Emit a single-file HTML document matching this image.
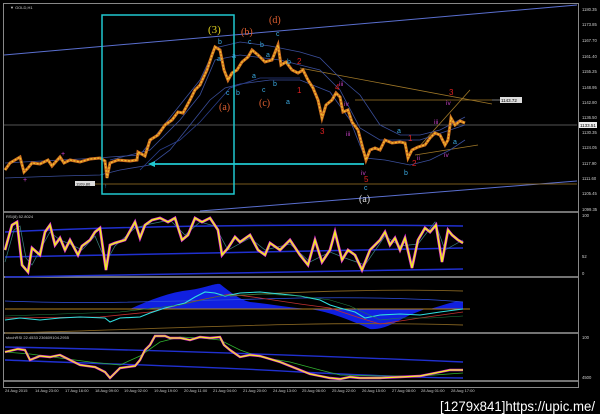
<!DOCTYPE html>
<html><head><meta charset="utf-8"><style>
html,body{margin:0;padding:0;background:#000;width:600px;height:414px;overflow:hidden}
svg{display:block}
</style></head><body>
<svg width="600" height="414" viewBox="0 0 600 414" xmlns="http://www.w3.org/2000/svg" font-family="Liberation Sans, sans-serif">
<rect width="600" height="414" fill="#000"/>
<rect x="3.5" y="3.5" width="575" height="384" fill="none" stroke="#888" stroke-width="1"/>
<line x1="4" y1="212" x2="578" y2="212" stroke="#999" stroke-width="1.5"/>
<line x1="4" y1="277" x2="578" y2="277" stroke="#999" stroke-width="1.5"/>
<line x1="4" y1="333" x2="578" y2="333" stroke="#999" stroke-width="1.5"/>
<line x1="4" y1="381" x2="578" y2="381" stroke="#999" stroke-width="1.5"/>
<text x="10" y="9" font-size="4" fill="#ccc">▼ GOLD,H1</text>

<line x1="4" y1="55" x2="577" y2="5" stroke="#5a6fd0" stroke-width="1"/>
<line x1="200" y1="211" x2="577" y2="181" stroke="#5a6fd0" stroke-width="1"/>
<line x1="4" y1="125" x2="577" y2="125" stroke="#aaa" stroke-width="0.6"/>
<line x1="75" y1="184" x2="577" y2="184" stroke="#a07828" stroke-width="0.8"/>
<line x1="355" y1="100" x2="492" y2="100" stroke="#a07828" stroke-width="0.8"/>
<line x1="300" y1="68" x2="492" y2="104" stroke="#a07828" stroke-width="0.8"/>
<line x1="415" y1="155" x2="478" y2="145" stroke="#a07828" stroke-width="0.8"/>
<line x1="418" y1="148" x2="470" y2="90" stroke="#a07828" stroke-width="0.8"/>
<polyline fill="none" stroke="#3a4e9a" stroke-width="0.8" points="5,163 60,160 100,158 110,157 140,155 160,130 180,105 200,80 215,48 240,42 270,46 300,52 320,58 340,78 360,95 380,125 400,135 420,135 440,130 465,117"/>
<polyline fill="none" stroke="#3a4e9a" stroke-width="0.8" points="5,178 60,176 100,175 120,170 150,165 170,150 190,125 210,100 225,88 240,84 270,80 300,80 330,92 350,120 365,158 385,160 410,165 430,160 450,150 465,140"/>
<polyline fill="none" stroke="#3a4e9a" stroke-width="0.8" points="110,160 150,150 180,120 200,95 215,60 240,55 280,60 320,70 340,90 360,128 380,140 420,140 450,130 465,125"/>
<polyline fill="none" stroke="#2a3e8a" stroke-width="0.8" points="140,170 160,150 180,140 200,122 215,105 230,88 260,78 300,78"/>
<polyline fill="none" stroke="#d07020" stroke-width="3" points="5,170 10,163 15,160 20,157 24,172 28,168 32,163 40,164 48,160 52,166 60,157 64,163 70,160 80,162 90,159 100,158 105,161 107,178 110,163 118,160 130,161 137,160 138,152 145,156 150,140 158,135 165,125 172,120 178,112 183,113 190,100 195,90 200,85 207,70 212,55 215,47 220,50 224,70 228,80 232,73 237,70 242,62 248,57 252,50 258,55 265,62 272,60 278,45 281,65 286,62 292,70 298,73 303,70 308,80 313,88 318,100 322,118 326,105 332,100 336,93 340,97 343,112 348,110 352,122 358,130 362,145 366,160 370,150 375,148 380,150 385,140 392,143 400,142 405,143 408,158 412,150 418,147 425,145 430,138 435,133 440,135 445,145 448,140 451,118 455,125 460,121 465,123"/>
<polyline fill="none" stroke="#f0c030" stroke-width="1.3" stroke-dasharray="2 1.5" points="5,170 10,163 15,160 20,157 24,172 28,168 32,163 40,164 48,160 52,166 60,157 64,163 70,160 80,162 90,159 100,158 105,161 107,178 110,163 118,160 130,161 137,160 138,152 145,156 150,140 158,135 165,125 172,120 178,112 183,113 190,100 195,90 200,85 207,70 212,55 215,47 220,50 224,70 228,80 232,73 237,70 242,62 248,57 252,50 258,55 265,62 272,60 278,45 281,65 286,62 292,70 298,73 303,70 308,80 313,88 318,100 322,118 326,105 332,100 336,93 340,97 343,112 348,110 352,122 358,130 362,145 366,160 370,150 375,148 380,150 385,140 392,143 400,142 405,143 408,158 412,150 418,147 425,145 430,138 435,133 440,135 445,145 448,140 451,118 455,125 460,121 465,123"/>
<text x="61" y="156" font-size="7" fill="#d040d0">+</text>
<text x="23" y="182" font-size="7" fill="#d040d0">+</text>
<rect x="102" y="15" width="132" height="179" fill="none" stroke="#20c8d0" stroke-width="1.5"/>
<line x1="152" y1="164" x2="364" y2="164" stroke="#20c8d0" stroke-width="1.8"/>
<polygon points="148,164 155,161 155,167" fill="#20c8d0"/>
<text x="104" y="188" font-size="6" fill="#3090e0">↑</text>
<rect x="75" y="181" width="20" height="5" fill="#ddd"/>
<text x="76" y="185.5" font-size="4" fill="#000">1109.80</text>
<rect x="500" y="97" width="22" height="6" fill="#ddd"/>
<text x="501" y="102" font-size="4.5" fill="#000">1143.72</text>
<line x1="492" y1="100" x2="500" y2="100" stroke="#ccc" stroke-width="0.6"/>
<g font-family="Liberation Serif, serif">
<text x="208" y="33" font-size="11" fill="#e0d020">(3)</text>
<text x="241" y="35" font-size="10" fill="#e06030">(b)</text>
<text x="269" y="23" font-size="10" fill="#e06030">(d)</text>
<text x="219" y="110" font-size="10" fill="#e06030">(a)</text>
<text x="259" y="106" font-size="10" fill="#e06030">(c)</text>
<text x="359" y="202" font-size="10" fill="#ddd">(a)</text>
</g>
<g font-size="7" fill="#3aa8e0">
<text x="218" y="44">b</text><text x="217" y="61">a</text><text x="226" y="95">c</text><text x="236" y="95">b</text>
<text x="232" y="58">a</text><text x="248" y="44">c</text><text x="260" y="47">b</text><text x="266" y="57">a</text>
<text x="252" y="78">a</text><text x="262" y="92">c</text><text x="273" y="86">b</text><text x="286" y="104">a</text>
<text x="287" y="64">b</text><text x="276" y="36">c</text>
<text x="397" y="133">a</text><text x="404" y="175">b</text><text x="364" y="190">c</text><text x="453" y="144">a</text>
</g>
<g font-size="8" fill="#e02020">
<text x="297" y="64">2</text><text x="297" y="93">1</text><text x="335" y="90">4</text><text x="320" y="134">3</text>
<text x="408" y="141">1</text><text x="412" y="166">2</text><text x="449" y="95">3</text><text x="364" y="182">5</text>
</g>
<g font-size="6.5" fill="#c040c0">
<text x="344" y="106">iv</text><text x="339" y="86">iii</text><text x="346" y="136">iii</text>
<text x="361" y="175">iv</text><text x="434" y="124">iii</text><text x="446" y="105">iv</text><text x="444" y="157">iv</text><text x="417" y="160">ii</text>
</g>
<g font-size="4.2" fill="#ccc">
<text x="582" y="11">1180.35</text><text x="582" y="26">1173.85</text><text x="582" y="42">1167.70</text>
<text x="582" y="58">1161.40</text><text x="582" y="73">1155.25</text><text x="582" y="89">1148.95</text>
<text x="582" y="104">1142.80</text><text x="582" y="119">1136.50</text><text x="582" y="134">1130.35</text>
<text x="582" y="149">1124.05</text><text x="582" y="165">1117.90</text><text x="582" y="180">1111.60</text>
<text x="582" y="195">1105.45</text><text x="582" y="211">1099.35</text>
<text x="582" y="217">100</text><text x="582" y="258">52</text><text x="582" y="275">0</text>
<text x="582" y="339">100</text><text x="582" y="379">4500</text>
</g>
<rect x="579" y="122" width="18" height="6" fill="#eee"/>
<text x="580" y="127" font-size="4.5" fill="#000">1133.51</text>

<text x="6" y="218" font-size="4" fill="#ccc">RSI(8) 52.8024</text>
<path d="M5,232 C150,225 300,224 463,226" fill="none" stroke="#2030d0" stroke-width="1.5"/>
<path d="M5,257 C150,253 300,250 463,248" fill="none" stroke="#2030d0" stroke-width="1.5"/>
<path d="M5,277 C150,275 300,273 463,269" fill="none" stroke="#2030d0" stroke-width="1.5"/>
<polyline fill="none" stroke="#3a8080" stroke-width="0.7" points="5,262 14,230 20,226 26,258 32,265 40,250 50,232 60,240 70,244 82,250 95,236 106,262 115,246 135,228 150,224 170,220 185,235 200,222 215,226 228,250 250,238 265,250 290,244 310,262 330,252 345,258 365,265 385,236 400,246 418,244 435,222 445,250 463,240"/>
<polyline fill="none" stroke="#e030e0" stroke-width="2.8" points="5,250 12,225 17,222 22,265 28,272 32,248 40,255 45,232 50,225 55,245 60,238 65,250 70,240 78,255 82,246 90,240 95,232 100,228 106,270 110,245 115,243 125,240 135,222 140,238 145,225 152,220 160,218 168,222 175,218 182,240 188,235 195,218 202,222 210,218 218,230 222,255 228,248 235,237 240,242 250,235 258,250 265,255 270,243 280,250 290,240 300,255 308,265 315,240 322,262 330,250 335,232 342,260 348,250 355,255 362,270 370,250 375,245 380,240 385,232 390,245 395,238 400,250 405,238 412,268 418,240 425,228 430,232 436,225 442,262 448,230 452,235 458,240 463,243"/>
<polyline fill="none" stroke="#f0f020" stroke-width="1.5" points="5,250 12,225 17,222 22,265 28,272 32,248 40,255 45,232 50,225 55,245 60,238 65,250 70,240 78,255 82,246 90,240 95,232 100,228 106,270 110,245 115,243 125,240 135,222 140,238 145,225 152,220 160,218 168,222 175,218 182,240 188,235 195,218 202,222 210,218 218,230 222,255 228,248 235,237 240,242 250,235 258,250 265,255 270,243 280,250 290,240 300,255 308,265 315,240 322,262 330,250 335,232 342,260 348,250 355,255 362,270 370,250 375,245 380,240 385,232 390,245 395,238 400,250 405,238 412,268 418,240 425,228 430,232 436,225 442,262 448,230 452,235 458,240 463,243"/>

<path d="M5,309 L130,309 C150,300 170,292 190,290 C205,288 215,283 220,284 C230,292 240,300 250,302 C270,304 290,308 310,309 Z" fill="#1020e0"/>
<path d="M310,309 C330,312 350,320 370,329 C385,330 395,322 410,315 L425,309 Z" fill="#1020e0"/>
<path d="M430,309 C445,305 455,300 463,302 L463,309 Z" fill="#1020e0"/>
<path d="M5,301 C100,305 200,300 300,298 C380,297 430,299 463,302" fill="none" stroke="#3050e0" stroke-width="0.8"/>
<line x1="5" y1="309" x2="470" y2="309" stroke="#b08020" stroke-width="1"/>
<path d="M230,296 C300,291 400,289 463,291" fill="none" stroke="#806020" stroke-width="0.9"/>
<path d="M5,333 C150,330 300,320 463,325" fill="none" stroke="#806020" stroke-width="0.9"/>
<polyline fill="none" stroke="#c03030" stroke-width="0.8" points="5,318 100,317 150,312 200,300 230,294 260,298 300,304 330,308 360,318 380,324 420,318 463,312"/>
<polyline fill="none" stroke="#30e0e0" stroke-width="1.1" points="5,320 20,318 40,320 60,318 80,317 105,318 110,322 120,318 140,317 150,313 165,308 185,303 195,297 205,292 215,293 225,296 240,293 260,292 280,294 300,296 320,300 330,305 340,308 355,312 365,318 380,315 400,314 420,315 440,312 455,310 463,309"/>
<polyline fill="none" stroke="#208040" stroke-width="0.6" points="5,316 60,314 120,312 180,305 220,296 260,294 300,296 330,300 350,306 380,320 400,318 430,318 463,316"/>

<text x="6" y="339" font-size="4" fill="#ccc">stochRSI 22.4533 236609104.2955</text>
<path d="M5,347 C150,350 300,355 463,362" fill="none" stroke="#2030d0" stroke-width="1.4"/>
<path d="M5,360 C100,364 200,366 300,372 C380,376 430,378 463,378" fill="none" stroke="#2030d0" stroke-width="1.4"/>
<polyline fill="none" stroke="#30b030" stroke-width="0.8" points="5,352 30,354 60,358 90,362 120,365 140,356 160,342 180,337 200,338 220,340 240,350 260,357 290,362 320,370 340,375 380,376 420,376 463,373"/>
<polyline fill="none" stroke="#e030e0" stroke-width="2.4" points="5,352 18,349 25,350 30,360 40,356 50,357 60,355 70,360 80,365 95,367 105,372 110,378 120,368 135,366 140,360 145,350 150,345 155,336 165,336 170,338 180,338 190,340 200,337 210,338 220,337 224,345 230,350 240,357 250,355 260,356 270,359 280,362 290,366 300,370 310,374 320,376 330,378 340,379 350,377 360,378 380,378 400,377 420,376 440,372 450,370 463,370"/>
<polyline fill="none" stroke="#f0f020" stroke-width="1.2" points="5,352 18,349 25,350 30,360 40,356 50,357 60,355 70,360 80,365 95,367 105,372 110,378 120,368 135,366 140,360 145,350 150,345 155,336 165,336 170,338 180,338 190,340 200,337 210,338 220,337 224,345 230,350 240,357 250,355 260,356 270,359 280,362 290,366 300,370 310,374 320,376 330,378 340,379 350,377 360,378 380,378 400,377 420,376 440,372 450,370 463,370"/>

<g font-size="4" fill="#ccc">
<text x="5" y="392">24 Aug 2015</text><text x="35" y="392">14 Aug 23:00</text><text x="65" y="392">17 Aug 16:00</text>
<text x="95" y="392">18 Aug 09:00</text><text x="124" y="392">19 Aug 02:00</text><text x="154" y="392">19 Aug 19:00</text>
<text x="184" y="392">20 Aug 11:00</text><text x="213" y="392">21 Aug 04:00</text><text x="243" y="392">21 Aug 20:00</text>
<text x="273" y="392">24 Aug 13:00</text><text x="302" y="392">25 Aug 06:00</text><text x="332" y="392">25 Aug 22:00</text>
<text x="362" y="392">26 Aug 15:00</text><text x="392" y="392">27 Aug 08:00</text><text x="421" y="392">28 Aug 01:00</text>
<text x="451" y="392">28 Aug 17:00</text>
</g>
<text x="440" y="411" font-size="14" fill="#fff" font-family="Liberation Sans Narrow, Liberation Sans, sans-serif" textLength="155" lengthAdjust="spacingAndGlyphs">[1279x841]https://upic.me/</text>
</svg>
</body></html>
